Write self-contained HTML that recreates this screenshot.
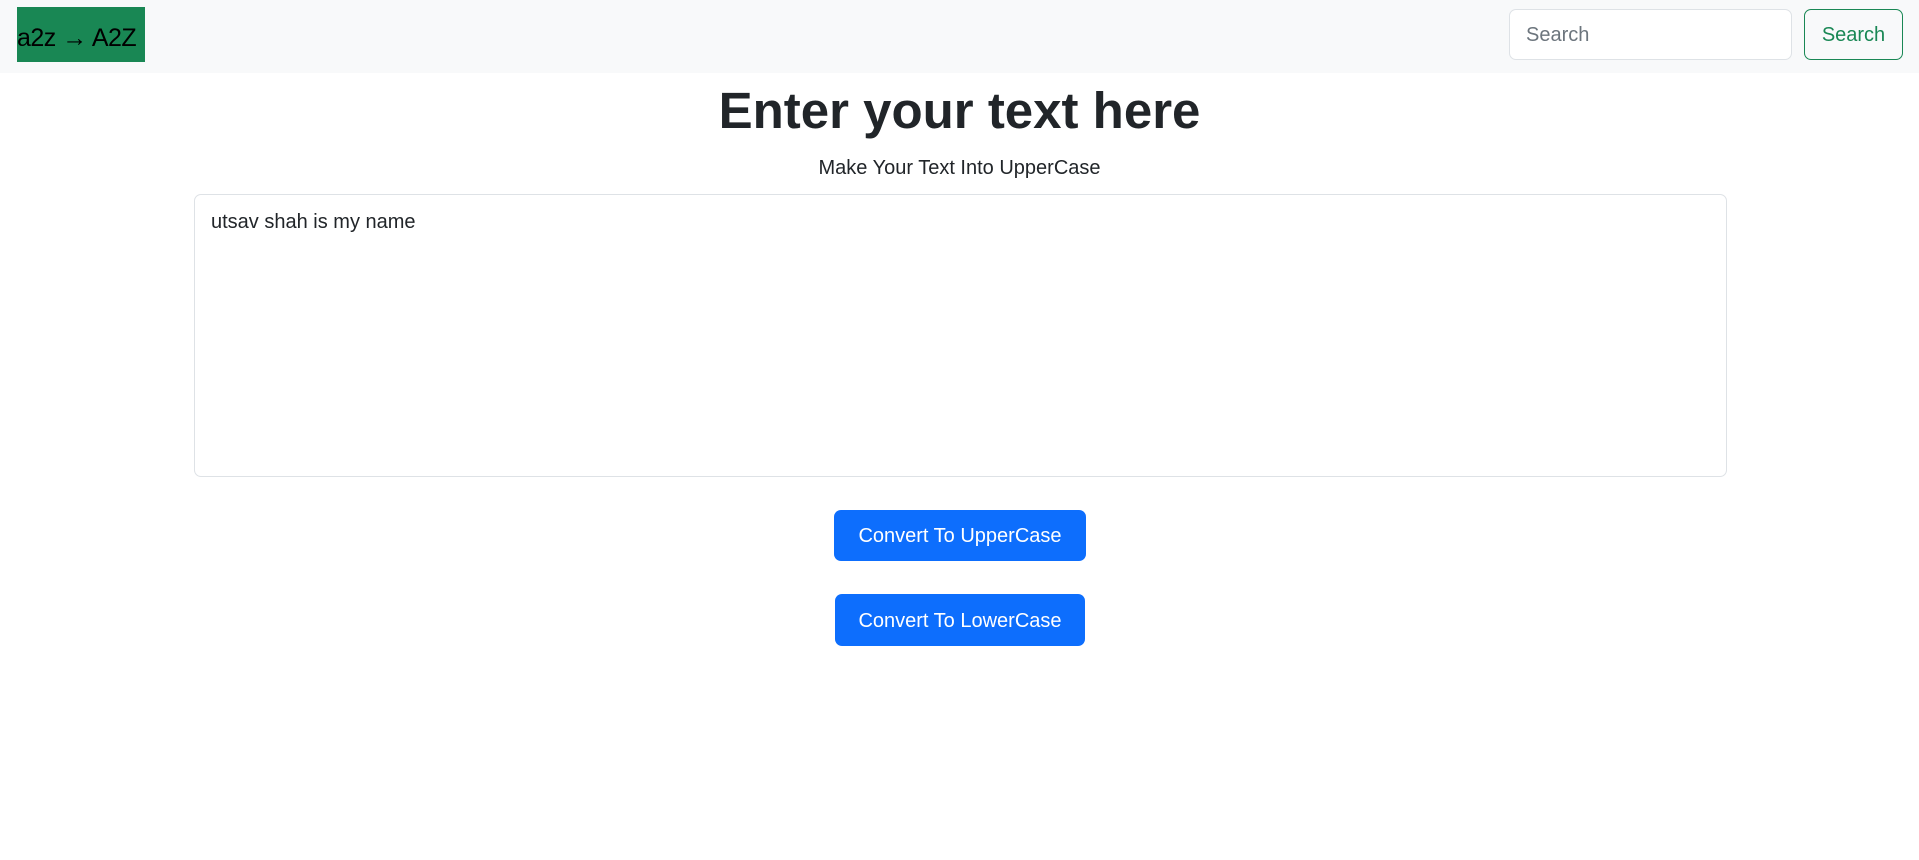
<!DOCTYPE html>
<html><head><style>
body{margin:0;width:1919px;height:860px;background:#fff;font-family:"Liberation Sans",sans-serif;color:#212529;position:relative;overflow:hidden}
.nav{position:absolute;left:0;top:0;width:1919px;height:73px;background:#f8f9fa}
.logo{position:absolute;left:17px;top:7px;width:128px;height:55px;background:#198754;color:#000;font-size:25px;line-height:62px;white-space:nowrap;overflow:hidden;letter-spacing:-0.5px}
.inp{position:absolute;left:1509px;top:9px;border:1px solid #dee2e6;border-radius:7px;background:#fff;box-sizing:border-box;width:283px;height:51px;font-size:20px;color:#6c757d;line-height:51px;padding-left:16px}
.sbtn{position:absolute;left:1804px;top:9px;width:99px;height:51px;border:1px solid #198754;border-radius:7px;box-sizing:border-box;color:#198754;font-size:20px;line-height:51px;text-align:center}
h1{position:absolute;left:0;width:1919px;top:78px;margin:0;text-align:center;font-size:51px;font-weight:bold;line-height:66px}
.sub{position:absolute;left:0;width:1919px;top:154px;text-align:center;font-size:20px;line-height:28px}
.ta{position:absolute;left:194px;top:194px;width:1533px;height:283px;border:1px solid #dee2e6;border-radius:7px;box-sizing:border-box;font-size:20px;padding:16px 16px}
.btn{position:absolute;background:#0d6efd;color:#fff;border-radius:7px;font-size:20px;text-align:center;height:51px;line-height:53px}
</style></head><body>
<div class="nav"><div class="logo">a2z → A2Z</div><div class="inp">Search</div><div class="sbtn">Search</div></div>
<h1>Enter your text here</h1>
<div class="sub">Make Your Text Into UpperCase</div>
<div class="ta">utsav shah is my name</div>
<div class="btn" style="left:834px;top:510px;width:252px">Convert To UpperCase</div>
<div class="btn" style="left:835px;top:594px;width:250px;height:52px;line-height:54px">Convert To LowerCase</div>
</body></html>
